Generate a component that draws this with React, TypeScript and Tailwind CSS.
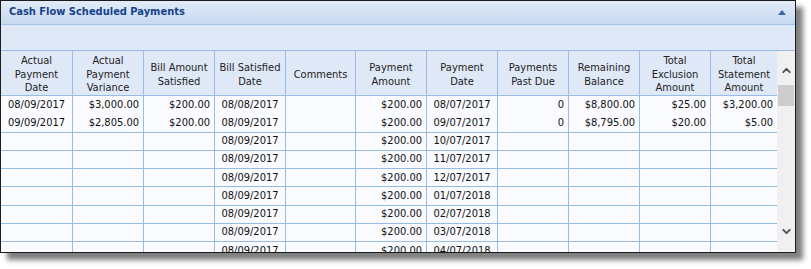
import { ChevronDown, ChevronUp } from 'lucide-react';

type Col = { label: string[]; width: string; align: 'center' | 'right' };

const columns: Col[] = [
  { label: ['Actual', 'Payment', 'Date'], width: 'w-[72px]', align: 'center' },
  { label: ['Actual', 'Payment', 'Variance'], width: 'w-[71px]', align: 'right' },
  { label: ['Bill Amount', 'Satisfied'], width: 'w-[71px]', align: 'right' },
  { label: ['Bill Satisfied', 'Date'], width: 'w-[71px]', align: 'center' },
  { label: ['Comments'], width: 'w-[70px]', align: 'center' },
  { label: ['Payment', 'Amount'], width: 'w-[71px]', align: 'right' },
  { label: ['Payment', 'Date'], width: 'w-[71px]', align: 'center' },
  { label: ['Payments', 'Past Due'], width: 'w-[71px]', align: 'right' },
  { label: ['Remaining', 'Balance'], width: 'w-[71px]', align: 'right' },
  { label: ['Total', 'Exclusion', 'Amount'], width: 'w-[71px]', align: 'right' },
  { label: ['Total', 'Statement', 'Amount'], width: 'w-[66px]', align: 'right' },
];

const rows: string[][] = [
  ['08/09/2017', '$3,000.00', '$200.00', '08/08/2017', '', '$200.00', '08/07/2017', '0', '$8,800.00', '$25.00', '$3,200.00'],
  ['09/09/2017', '$2,805.00', '$200.00', '08/09/2017', '', '$200.00', '09/07/2017', '0', '$8,795.00', '$20.00', '$5.00'],
  ['', '', '', '08/09/2017', '', '$200.00', '10/07/2017', '', '', '', ''],
  ['', '', '', '08/09/2017', '', '$200.00', '11/07/2017', '', '', '', ''],
  ['', '', '', '08/09/2017', '', '$200.00', '12/07/2017', '', '', '', ''],
  ['', '', '', '08/09/2017', '', '$200.00', '01/07/2018', '', '', '', ''],
  ['', '', '', '08/09/2017', '', '$200.00', '02/07/2018', '', '', '', ''],
  ['', '', '', '08/09/2017', '', '$200.00', '03/07/2018', '', '', '', ''],
  ['', '', '', '08/09/2017', '', '$200.00', '04/07/2018', '', '', '', ''],
];

export default function App() {
  return (
    <div className="h-[269px] w-[811px] bg-white font-['DejaVu_Sans_Condensed','Liberation_Sans',sans-serif] text-[11px] text-[#111]">
      <div className="flex h-[253px] w-[796px] flex-col overflow-hidden border border-[#1c1c1c] shadow-[7px_7px_5px_rgba(0,0,0,0.5)]">
        {/* title bar */}
        <div className="flex h-[24px] shrink-0 items-center justify-between border-b border-[#a7c3e8] bg-gradient-to-b from-[#e2ebf7] to-[#c6d9f0] pl-[8px] pr-[9px]">
          <span className="text-[11px] font-bold text-[#15428b]">Cash Flow Scheduled Payments</span>
          <span className="h-0 w-0 border-x-[4px] border-b-[5px] border-x-transparent border-b-[#3a64a8]" />
        </div>

        {/* toolbar */}
        <div className="h-[26px] shrink-0 border-b border-[#99bbe8] bg-[#dfe8f6]" />

        <div className="flex min-h-0 flex-1">
          <div className="min-w-0 flex-1 overflow-hidden">
            <div className="flex h-[45px] border-b border-[#99bbe8] bg-[#dfe8f6]">
              {columns.map((col, i) => (
                <div
                  key={i}
                  className={`${col.width} flex shrink-0 flex-col items-center justify-center pt-[3px] leading-[13.5px] text-[#222] ${i < columns.length - 1 ? 'border-r border-[#99bbe8]' : ''}`}
                >
                  {col.label.map((line) => (
                    <span key={line}>{line}</span>
                  ))}
                </div>
              ))}
            </div>

            {rows.map((row, r) => (
              <div
                key={r}
                className={`flex h-[18.3px] bg-[#f9fbfe] ${r === 0 ? '' : 'border-b border-[#99bbe8]'}`}
              >
                {row.map((cell, i) => (
                  <div
                    key={i}
                    className={`${columns[i].width} flex shrink-0 items-center overflow-hidden whitespace-nowrap ${
                      columns[i].align === 'center' ? 'justify-center' : 'justify-end pr-[4px]'
                    } ${i < columns.length - 1 ? 'border-r border-[#99bbe8]' : ''}`}
                  >
                    {cell}
                  </div>
                ))}
              </div>
            ))}
          </div>

          {/* scrollbar */}
          <div className="flex w-[18px] shrink-0 flex-col items-center bg-[#f0f0f0]">
            <ChevronUp className="mt-[13px] size-[13px] text-[#505050]" strokeWidth={3.5} />
            <div className="mt-[8px] h-[21px] w-[16px] bg-[#cdcdcd]" />
            <div className="flex-1" />
            <ChevronDown className="mb-[14px] size-[13px] text-[#505050]" strokeWidth={3.5} />
          </div>
        </div>
      </div>
    </div>
  );
}
